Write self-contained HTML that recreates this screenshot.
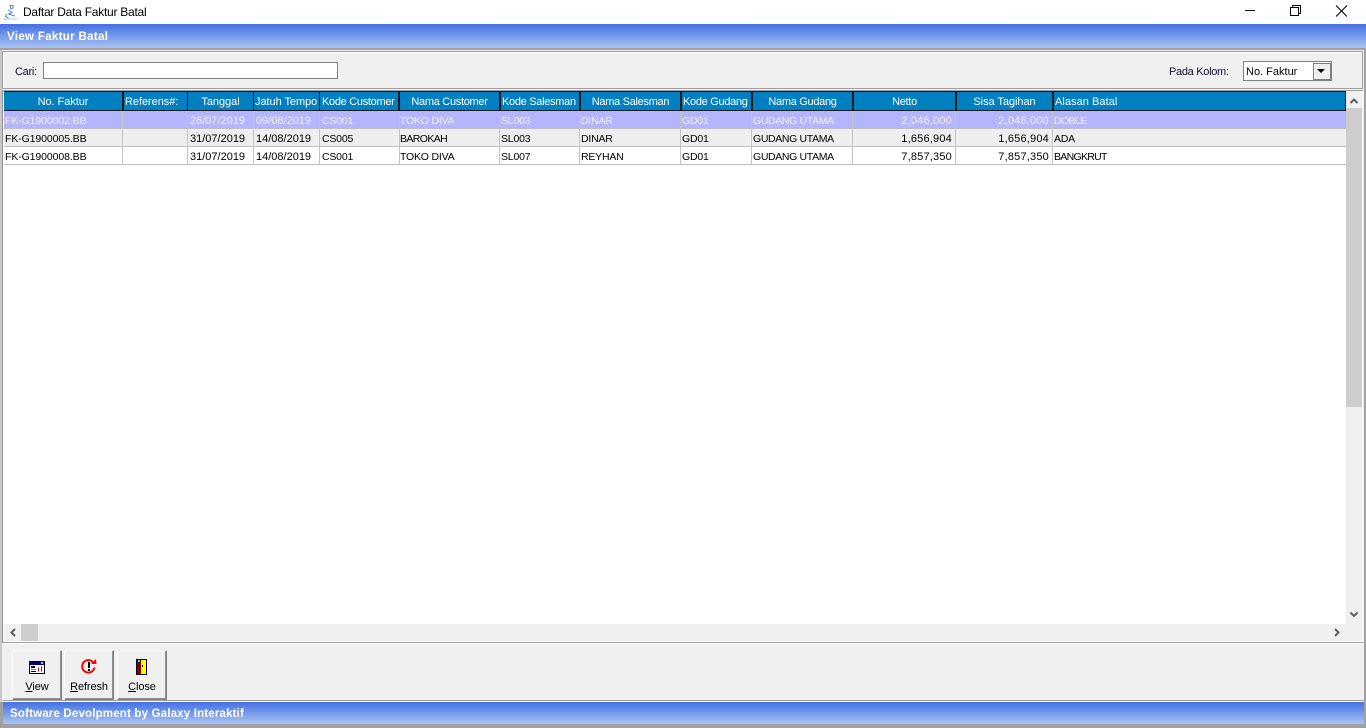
<!DOCTYPE html>
<html><head><meta charset="utf-8"><style>
*{box-sizing:border-box}
html,body{margin:0;padding:0;width:1366px;height:728px;overflow:hidden;background:#f0f0f0;font-family:"Liberation Sans",sans-serif;font-size:11px;color:#000}
.a{position:absolute}
.t{position:absolute;white-space:nowrap;line-height:13px}
.h{position:absolute;top:92px;height:18px;background:#0080c0;color:#fff;line-height:20px;font-size:11px;letter-spacing:-.05px;white-space:nowrap;overflow:hidden;padding-left:2px}
.h.c{text-align:center;padding:0}
.h.n{letter-spacing:-.3px}
.r{position:absolute;left:4px;width:1342px;height:18px;border-bottom:1px solid #bfbfbf}
.v{position:absolute;top:111px;width:1px;height:54px;background:#c4c4c4}
.d{position:absolute;white-space:nowrap;line-height:21px;height:17px;font-size:10.500px;letter-spacing:-.2px}
.f{letter-spacing:-.1px}
.g{letter-spacing:-.35px}
.dt{font-size:11px;letter-spacing:0}
.num{font-size:11px;letter-spacing:.2px}
.btn{position:absolute;top:650px;height:50px;background:#f0f0f0;border:1px solid;border-color:#fff #808080 #808080 #fff;box-shadow:inset -1px -1px 0 #909090;text-align:center;padding-top:30px;line-height:13px;font-size:11px;letter-spacing:-.1px}
.btn u{text-decoration:underline}
.grad{position:absolute;background:linear-gradient(#4470e4,#a8c3f2)}
</style></head><body>
<div class="a" style="left:0;top:0;width:1366px;height:24px;background:#fff"></div>
<svg class="a" style="left:3px;top:4px" width="16" height="16" viewBox="0 0 16 16"><path d="M7 1.500h3v2.500l-2 1zM5 6l4 2.500-3.500 1.500 6.500 2M3.500 10l-1 2.500 3 1.500" fill="none" stroke="#5a82c4" stroke-width="1"/><path d="M1 15h13" stroke="#8fd0f0"/></svg>
<div class="t" style="left:23px;top:6px;font-size:12px;letter-spacing:-.25px">Daftar Data Faktur Batal</div>
<svg class="a" style="left:1240px;top:0" width="120" height="20" fill="none" stroke="#000"><path d="M5 10.500h10"/><path d="M50.500 7.500h8v8h-8zM52.500 7V5.500h8v8H59"/><path d="M96 5.500l11 11M107 5.500l-11 11" stroke-width="1.100"/></svg>

<div class="grad" style="left:0;width:1366px;top:24px;height:24px"></div>
<div class="t" style="left:7px;top:31px;color:#fff;font-weight:bold;font-size:11.500px;letter-spacing:.33px">View Faktur Batal</div>
<div class="a" style="left:0;top:48px;width:1366px;height:2px;background:#a0a0a0"></div>
<div class="a" style="left:0;top:50px;width:2px;height:675px;background:#c8c8c8"></div>
<div class="a" style="left:1364px;top:50px;width:2px;height:678px;background:#a0a0a0"></div>
<div class="a" style="left:2px;top:51px;width:1361px;height:38px;border:1px solid #a0a0a0;box-shadow:inset 1px 1px 0 #fff;background:#f0f0f0"></div>
<div class="t" style="left:15px;top:66px;letter-spacing:-.3px;color:#101030">Cari:</div>
<div class="a" style="left:43px;top:62px;width:295px;height:17px;background:#fff;border:1px solid #808080"></div>
<div class="t" style="left:1169px;top:66px;letter-spacing:-.3px;color:#101030">Pada Kolom:</div>
<div class="a" style="left:1243px;top:61px;width:89px;height:20px;background:#fff;border:1px solid #808080"></div>
<div class="t" style="left:1246px;top:66px;letter-spacing:0">No. Faktur</div>
<div class="a" style="left:1313px;top:63px;width:18px;height:17px;background:#f0f0f0;border:1px solid #808080"></div>
<svg class="a" style="left:1317px;top:69px" width="10" height="6"><path d="M0 0h8l-4 4z" fill="#000"/></svg>

<div class="a" style="left:2px;top:90px;width:1361px;height:553px;background:#fff;border-left:1px solid #909090;border-top:1px solid #a0a0a0"></div>
<div class="a" style="left:3px;top:91px;width:1px;height:551px;background:#fff"></div>
<div class="a" style="left:4px;top:91px;width:1342px;height:20px;background:#101820"></div>
<div class="h c" style="left:4px;width:118px">No. Faktur</div>
<div class="h" style="left:124px;width:63px;padding-left:1px">Referens#:</div>
<div class="h c" style="left:188px;width:65px">Tanggal</div>
<div class="h" style="left:254px;width:65px;padding-left:1px">Jatuh Tempo</div>
<div class="h n" style="left:320px;width:78px">Kode Customer</div>
<div class="h c n" style="left:400px;width:99px">Nama Customer</div>
<div class="h n" style="left:501px;width:78px;padding-left:1px">Kode Salesman</div>
<div class="h c n" style="left:581px;width:99px">Nama Salesman</div>
<div class="h n" style="left:682px;width:69px;padding-left:1px">Kode Gudang</div>
<div class="h c n" style="left:753px;width:99px">Nama Gudang</div>
<div class="h c n" style="left:854px;width:101px">Netto</div>
<div class="h c" style="left:957px;width:95px">Sisa Tagihan</div>
<div class="h" style="left:1054px;width:291px;padding-left:1px;letter-spacing:.05px">Alasan Batal</div>

<div class="r" style="top:111px;background:#b4b4ff"></div>
<div class="r" style="top:129px;background:#eeeeee"></div>
<div class="r" style="top:147px;background:#fff"></div>
<div class="v" style="left:122px"></div><div class="v" style="left:187px"></div><div class="v" style="left:253px"></div><div class="v" style="left:319px"></div><div class="v" style="left:399px"></div><div class="v" style="left:499px"></div><div class="v" style="left:579px"></div><div class="v" style="left:680px"></div><div class="v" style="left:751px"></div><div class="v" style="left:852px"></div><div class="v" style="left:955px"></div><div class="v" style="left:1052px"></div>

<div style="color:#f2f2ff">
<div class="d f" style="left:5px;top:111px">FK-G1900002.BB</div><div class="d dt" style="left:190px;top:111px">26/07/2019</div><div class="d dt" style="left:256px;top:111px">09/08/2019</div><div class="d" style="left:322px;top:111px">CS001</div><div class="d" style="left:400px;top:111px">TOKO DIVA</div><div class="d" style="left:501px;top:111px">SL003</div><div class="d" style="left:581px;top:111px">DINAR</div><div class="d" style="left:682px;top:111px">GD01</div><div class="d g" style="left:753px;top:111px">GUDANG UTAMA</div><div class="d num" style="right:414px;top:111px">2,046,000</div><div class="d num" style="right:317px;top:111px">2,046,000</div><div class="d" style="left:1054px;top:111px;letter-spacing:-.6px">DOBLE</div>
</div>
<div>
<div class="d f" style="left:5px;top:129px">FK-G1900005.BB</div><div class="d dt" style="left:190px;top:129px">31/07/2019</div><div class="d dt" style="left:256px;top:129px">14/08/2019</div><div class="d" style="left:322px;top:129px">CS005</div><div class="d" style="left:400px;top:129px;letter-spacing:-.6px">BAROKAH</div><div class="d" style="left:501px;top:129px">SL003</div><div class="d" style="left:581px;top:129px">DINAR</div><div class="d" style="left:682px;top:129px">GD01</div><div class="d g" style="left:753px;top:129px">GUDANG UTAMA</div><div class="d num" style="right:414px;top:129px">1,656,904</div><div class="d num" style="right:317px;top:129px">1,656,904</div><div class="d" style="left:1054px;top:129px">ADA</div>
<div class="d f" style="left:5px;top:147px">FK-G1900008.BB</div><div class="d dt" style="left:190px;top:147px">31/07/2019</div><div class="d dt" style="left:256px;top:147px">14/08/2019</div><div class="d" style="left:322px;top:147px">CS001</div><div class="d" style="left:400px;top:147px">TOKO DIVA</div><div class="d" style="left:501px;top:147px">SL007</div><div class="d" style="left:581px;top:147px">REYHAN</div><div class="d" style="left:682px;top:147px">GD01</div><div class="d g" style="left:753px;top:147px">GUDANG UTAMA</div><div class="d num" style="right:414px;top:147px">7,857,350</div><div class="d num" style="right:317px;top:147px">7,857,350</div><div class="d" style="left:1054px;top:147px;letter-spacing:-.7px">BANGKRUT</div>
</div>

<div class="a" style="left:1346px;top:91px;width:16px;height:533px;background:#f0f0f0"></div>
<div class="a" style="left:1346px;top:108px;width:16px;height:299px;background:#cdcdcd"></div>
<svg class="a" style="left:1346px;top:91px" width="16" height="17" fill="none" stroke="#606060" stroke-width="2"><path d="M4.500 12l3.500-3.500 3.500 3.500"/></svg>
<svg class="a" style="left:1346px;top:607px" width="16" height="17" fill="none" stroke="#606060" stroke-width="2"><path d="M4.500 5.500l3.500 3.500 3.500-3.500"/></svg>
<div class="a" style="left:4px;top:624px;width:1358px;height:17px;background:#f0f0f0"></div>
<div class="a" style="left:21px;top:624px;width:17px;height:17px;background:#cdcdcd"></div>
<svg class="a" style="left:4px;top:624px" width="17" height="17" fill="none" stroke="#606060" stroke-width="2"><path d="M11 5l-3.500 3.500 3.500 3.500"/></svg>
<svg class="a" style="left:1329px;top:624px" width="17" height="17" fill="none" stroke="#606060" stroke-width="2"><path d="M6 5l3.500 3.500-3.500 3.500"/></svg>

<div class="a" style="left:3px;top:642px;width:1361px;height:1px;background:#a0a0a0"></div>
<div class="a" style="left:3px;top:643px;width:1361px;height:1px;background:#fff"></div>

<div class="btn" style="left:12px;width:50px"><u>V</u>iew</div>
<div class="btn" style="left:64px;width:50px"><u>R</u>efresh</div>
<div class="btn" style="left:117px;width:50px"><u>C</u>lose</div>
<svg class="a" style="left:29px;top:661px" width="16" height="14"><rect x=".5" y=".5" width="15" height="12" fill="#fff" stroke="#000"/><rect x="1" y="1" width="14" height="3" fill="#000080"/><rect x="12" y="1" width="2" height="2" fill="#c0c0c0"/><rect x="2" y="5" width="4" height="2" fill="#000"/><rect x="2" y="8" width="5" height="1" fill="#00c0c0"/><rect x="2" y="10" width="5" height="1" fill="#000"/><path d="M9 10.500V6.500h1v4h2V5.500h1v5z" fill="#e00000"/></svg>
<svg class="a" style="left:80px;top:658px" width="18" height="17" fill="none"><path d="M13 4.200A6.200 6.200 0 1 0 14.500 9.500" stroke="#ff0000" stroke-width="2"/><path d="M11 6l5.500 0-.5-5z" fill="#ff0000"/><rect x="8" y="4" width="2" height="6" fill="#000"/><rect x="8" y="11" width="2" height="2" fill="#000"/></svg>
<svg class="a" style="left:136px;top:659px" width="12" height="17"><rect x="0" y="0" width="11" height="16" fill="#000"/><rect x="1" y="1" width="4" height="14" fill="#800000"/><rect x="5" y="1" width="5" height="14" fill="#ffff00"/><rect x="2" y="1" width="2" height="2" fill="#00ffff"/><rect x="6" y="6" width="1" height="2" fill="#000"/></svg>

<div class="a" style="left:3px;top:700px;width:1361px;height:1px;background:#a0a0a0"></div>
<div class="a" style="left:3px;top:701px;width:1361px;height:1px;background:#fff"></div>
<div class="grad" style="left:3px;width:1361px;top:702px;height:22px"></div>
<div class="t" style="left:10px;top:708px;color:#fff;font-weight:bold;font-size:11.500px;letter-spacing:.18px">Software Devolpment by Galaxy Interaktif</div>
<div class="a" style="left:0;top:724px;width:1366px;height:4px;background:#a0a0a0"></div>
<div class="a" style="left:0;top:702px;width:3px;height:22px;background:#a0a0a0"></div>
</body></html>
